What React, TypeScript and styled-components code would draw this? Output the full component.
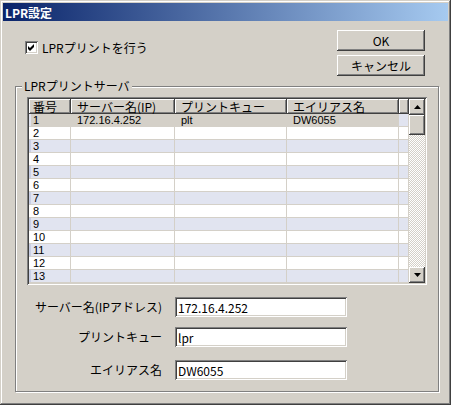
import React from "react";
import styled, { createGlobalStyle } from "styled-components";

const FACE = "#D4D0C8";
const SHADOW = "#808080";
const DARK = "#404040";
const LAVENDER = "#E1E4F0";
const STRIPE = "#C9CFE5";

const GlobalStyle = createGlobalStyle`
  html, body {
    margin: 0;
    padding: 0;
    background: ${FACE};
  }
  body {
    font-family: "Noto Sans CJK JP", "Noto Sans", sans-serif;
    font-size: 12px;
    color: #000;
  }
`;

type Server = { no: number; host: string; queue: string; alias: string };

const servers: Server[] = Array.from({ length: 13 }, (_, i) =>
  i === 0
    ? { no: 1, host: "172.16.4.252", queue: "plt", alias: "DW6055" }
    : { no: i + 1, host: "", queue: "", alias: "" }
);

const columns = ["番号", "サーバー名(IP)", "プリントキュー", "エイリアス名", ""];

export default function App() {
  return (
    <>
      <GlobalStyle />
      <S.Window>
        <S.TitleBar>LPR設定</S.TitleBar>
        <S.Client>
          <S.TopRow>
            <S.CheckRow>
              <S.CheckBox>
                <svg width="9" height="9" viewBox="0 0 9 9">
                  <polygon points="1,3 3,5 7,1 7,4 3,8 1,6" fill="#000" />
                </svg>
              </S.CheckBox>
              <span>LPRプリントを行う</span>
            </S.CheckRow>
            <S.ButtonColumn>
              <S.Button>OK</S.Button>
              <S.Button>キャンセル</S.Button>
            </S.ButtonColumn>
          </S.TopRow>

          <S.Group>
            <S.Legend>LPRプリントサーバ</S.Legend>
            <S.ListView>
              <div>
                <S.HeaderRow>
                  {columns.map((c, i) => (
                    <S.HeaderCell key={i} $first={i === 0}>
                      {c}
                    </S.HeaderCell>
                  ))}
                </S.HeaderRow>
                {servers.map((s, i) => {
                  const selected = i === 0;
                  const odd = i % 2 === 0;
                  const bg = selected ? FACE : odd ? LAVENDER : "#fff";
                  return (
                    <S.Row key={s.no}>
                      <S.Cell
                        $bg={bg}
                        $first
                        $stripe={odd ? (selected ? LAVENDER : STRIPE) : undefined}
                      >
                        {s.no}
                      </S.Cell>
                      <S.Cell $bg={bg}>{s.host}</S.Cell>
                      <S.Cell $bg={bg}>{s.queue}</S.Cell>
                      <S.Cell $bg={bg}>{s.alias}</S.Cell>
                      <S.Cell $bg={odd ? LAVENDER : "#fff"} />
                    </S.Row>
                  );
                })}
              </div>
              <S.ScrollBar>
                <S.ScrollButton>
                  <svg width="7" height="4" viewBox="0 0 7 4">
                    <polygon points="3.5,0 7,4 0,4" fill="#000" />
                  </svg>
                </S.ScrollButton>
                <S.Thumb />
                <S.Track />
                <S.ScrollButton>
                  <svg width="7" height="4" viewBox="0 0 7 4">
                    <polygon points="0,0 7,0 3.5,4" fill="#000" />
                  </svg>
                </S.ScrollButton>
              </S.ScrollBar>
            </S.ListView>

            <S.Form>
              <S.FormRow $gap={12}>
                <S.Label>サーバー名(IPアドレス)</S.Label>
                <S.Input readOnly value="172.16.4.252" />
              </S.FormRow>
              <S.FormRow $gap={10}>
                <S.Label>プリントキュー</S.Label>
                <S.Input readOnly value="lpr" />
              </S.FormRow>
              <S.FormRow $gap={13}>
                <S.Label>エイリアス名</S.Label>
                <S.Input readOnly value="DW6055" />
              </S.FormRow>
            </S.Form>
          </S.Group>
        </S.Client>
      </S.Window>
    </>
  );
}

const raised = `
  box-shadow: inset -1px -1px 0 ${DARK}, inset 1px 1px 0 #fff,
    inset -2px -2px 0 ${SHADOW}, inset 2px 2px 0 ${FACE};
`;

const sunken = `
  box-shadow: inset 1px 1px 0 ${SHADOW}, inset -1px -1px 0 #fff,
    inset 2px 2px 0 ${DARK}, inset -2px -2px 0 ${FACE};
`;

const GRID = "42px 104px 112px 112px 10px";

const S = {
  Window: styled.div`
    width: 451px;
    height: 405px;
    box-sizing: border-box;
    padding: 3px;
    background: ${FACE};
    display: flex;
    flex-direction: column;
    box-shadow: inset -1px -1px 0 ${DARK}, inset 1px 1px 0 ${FACE},
      inset -2px -2px 0 ${SHADOW}, inset 2px 2px 0 #fff;
  `,
  TitleBar: styled.div`
    height: 18px;
    flex: none;
    display: flex;
    align-items: center;
    padding-left: 2px;
    background: linear-gradient(to right, #0a246a, #a6caf0);
    color: #fff;
    font-weight: bold;
    font-size: 12px;
  `,
  Client: styled.div`
    flex: 1;
    display: flex;
    flex-direction: column;
    padding: 9px 10px 0 12px;
  `,
  TopRow: styled.div`
    display: flex;
    justify-content: space-between;
    align-items: flex-start;
    padding: 0 13px 0 10px;
  `,
  CheckRow: styled.label`
    display: flex;
    align-items: center;
    gap: 4px;
    margin-top: 11px;
    line-height: 13px;
  `,
  CheckBox: styled.span`
    width: 13px;
    height: 13px;
    background: #fff;
    display: flex;
    align-items: center;
    justify-content: center;
    ${sunken}
  `,
  ButtonColumn: styled.div`
    display: flex;
    flex-direction: column;
    gap: 4px;
  `,
  Button: styled.button`
    width: 88px;
    height: 21px;
    padding: 0;
    border: none;
    background: ${FACE};
    font: inherit;
    color: #000;
    ${raised}
  `,
  Group: styled.div`
    margin-top: 10px;
    width: 424px;
    box-sizing: border-box;
    padding: 0 10px 11px 11px;
    border: 1px solid ${SHADOW};
    box-shadow: inset 1px 1px 0 #fff, 1px 1px 0 #fff;
  `,
  Legend: styled.div`
    width: fit-content;
    margin: -8px 0 0 -5px;
    padding: 0 2px;
    line-height: 14px;
    background: ${FACE};
  `,
  ListView: styled.div`
    margin-top: 4px;
    width: 400px;
    height: 188px;
    box-sizing: border-box;
    padding: 2px;
    background: #fff;
    display: grid;
    grid-template-columns: 1fr 16px;
    ${sunken}
  `,
  HeaderRow: styled.div`
    display: grid;
    grid-template-columns: ${GRID};
    height: 15px;
  `,
  HeaderCell: styled.div<{ $first?: boolean }>`
    background: ${FACE};
    padding-left: ${(p) => (p.$first ? 4 : 6)}px;
    line-height: 15px;
    white-space: nowrap;
    overflow: hidden;
    ${raised}
  `,
  Row: styled.div`
    display: grid;
    grid-template-columns: ${GRID};
    height: 13px;
  `,
  Cell: styled.div<{ $bg: string; $first?: boolean; $stripe?: string }>`
    box-sizing: border-box;
    height: 13px;
    font-family: "Liberation Sans", "Noto Sans CJK JP", sans-serif;
    font-size: 11px;
    line-height: 12px;
    padding-left: ${(p) => (p.$first ? 4 : 6)}px;
    background: ${(p) => p.$bg};
    border-right: 1px solid ${FACE};
    border-bottom: 1px solid ${FACE};
    white-space: nowrap;
    ${(p) => (p.$stripe ? `box-shadow: inset 2px 0 0 ${p.$stripe};` : "")}
  `,
  ScrollBar: styled.div`
    display: flex;
    flex-direction: column;
  `,
  ScrollButton: styled.div`
    width: 16px;
    height: 16px;
    flex: none;
    background: ${FACE};
    display: flex;
    align-items: center;
    justify-content: center;
    ${raised}
  `,
  Thumb: styled.div`
    height: 20px;
    flex: none;
    background: ${FACE};
    ${raised}
  `,
  Track: styled.div`
    flex: 1;
    background-color: #fff;
    background-image: conic-gradient(
      ${FACE} 25%,
      #fff 0 50%,
      ${FACE} 0 75%,
      #fff 0
    );
    background-size: 2px 2px;
  `,
  Form: styled.div`
    display: flex;
    flex-direction: column;
  `,
  FormRow: styled.div<{ $gap: number }>`
    display: grid;
    grid-template-columns: 135px 172px;
    column-gap: 13px;
    align-items: center;
    margin-top: ${(p) => p.$gap}px;
  `,
  Label: styled.span`
    text-align: right;
    white-space: nowrap;
    line-height: 20px;
  `,
  Input: styled.input`
    height: 20px;
    width: 172px;
    box-sizing: border-box;
    border: none;
    outline: none;
    padding: 0 3px;
    background: #fff;
    font: inherit;
    color: #000;
    ${sunken}
  `,
};
